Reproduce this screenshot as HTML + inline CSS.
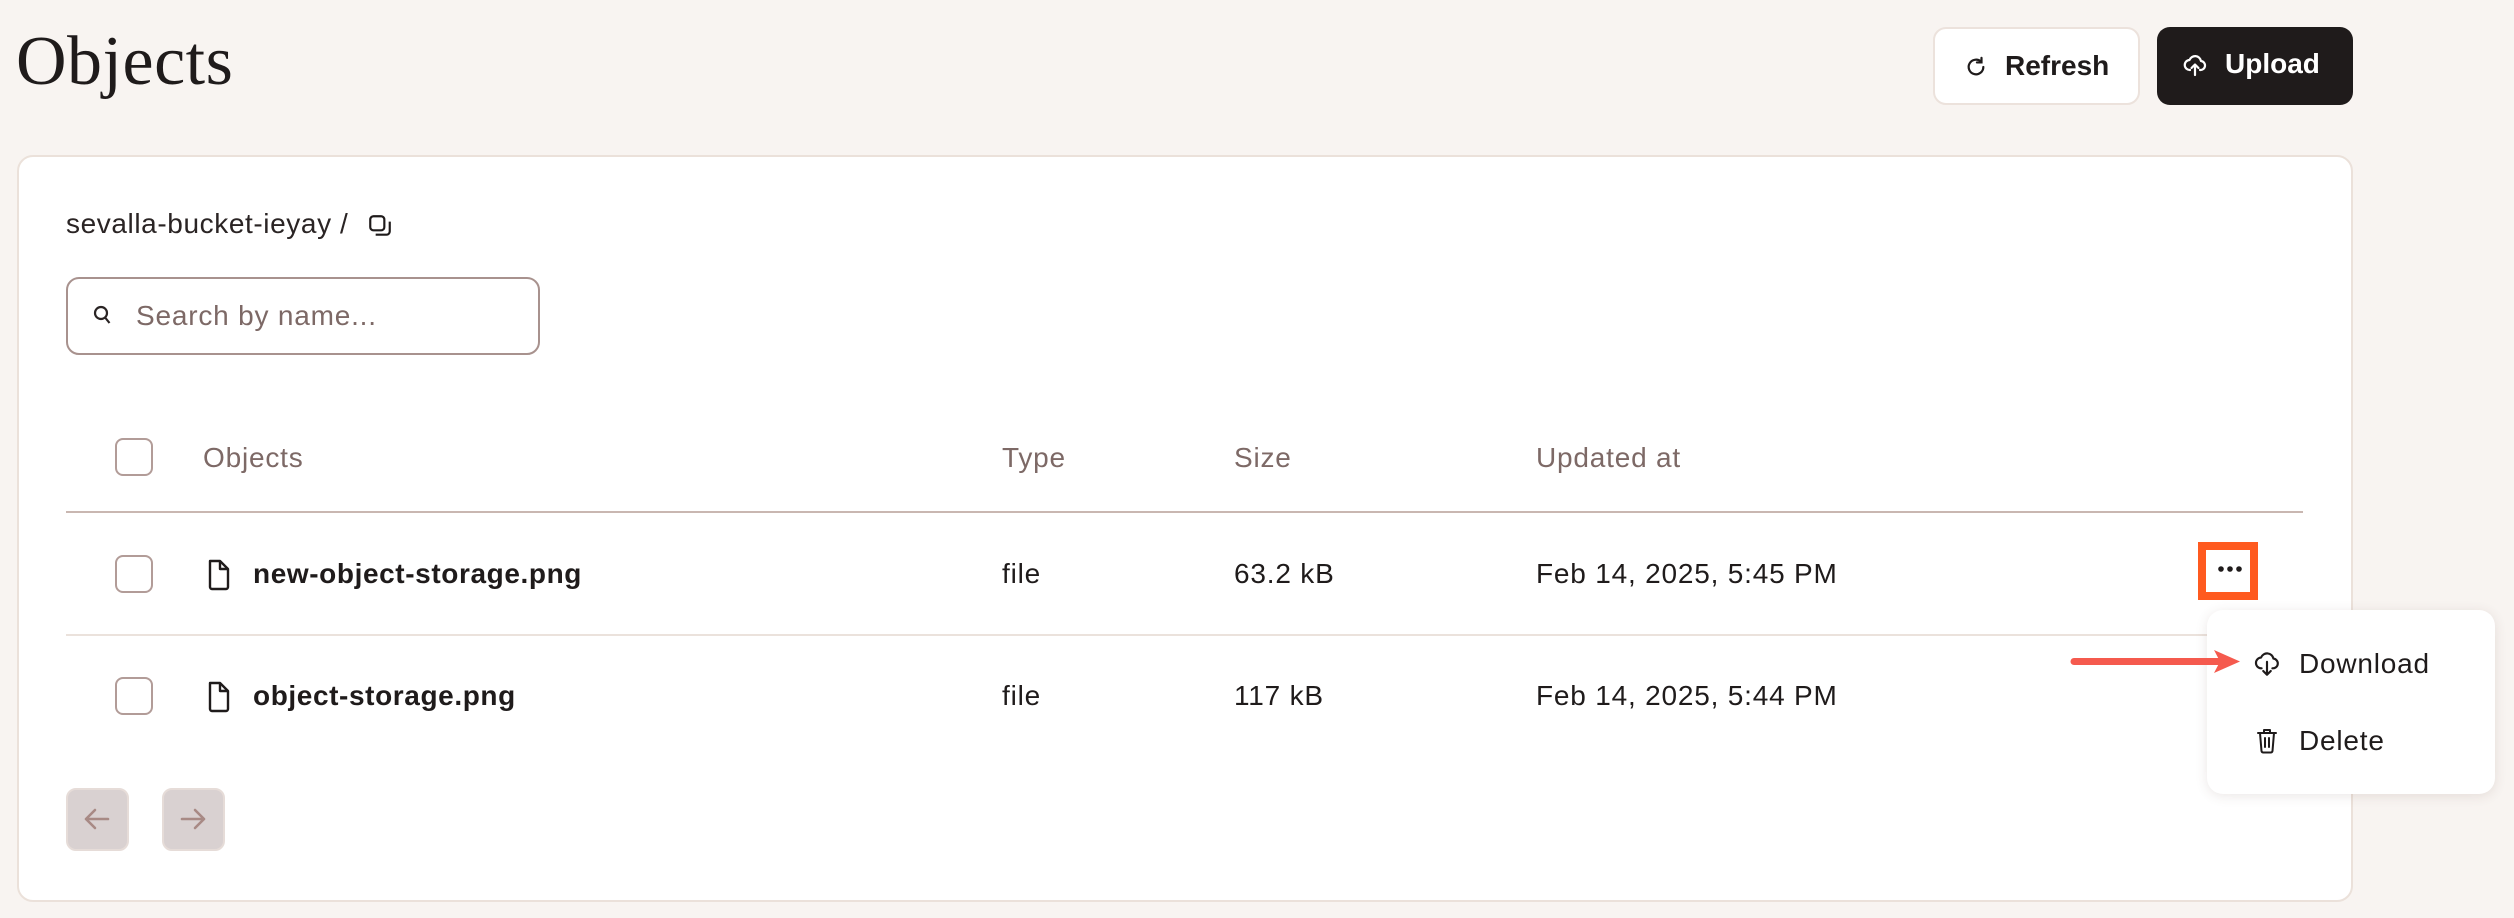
<!DOCTYPE html>
<html><head><meta charset="utf-8"><style>
*{margin:0;padding:0;box-sizing:border-box}
body{width:2514px;height:918px;background:#f8f4f1;font-family:"Liberation Sans",sans-serif;position:relative;overflow:hidden;color:#1f1b1b}
.abs{position:absolute}
h1{position:absolute;left:16px;top:22px;font-family:"Liberation Serif",serif;font-weight:400;font-size:70px;color:#1f1b1b;letter-spacing:0.5px}
.btn{position:absolute;top:27px;height:78px;border-radius:13px;display:flex;align-items:center;font-weight:700;font-size:28px}
.card{position:absolute;left:17px;top:155px;width:2336px;height:747px;background:#fff;border:2px solid #ebe1da;border-radius:16px}
.t{position:absolute;font-size:28px;line-height:32px;letter-spacing:0.8px}
.hd{color:#7d6966}
.cb{position:absolute;left:115px;width:38px;height:38px;border:2px solid #b29c98;border-radius:8px;background:#fff}
.nm{font-weight:700;color:#1f1b1b;letter-spacing:0.6px}
</style></head><body>
<h1>Objects</h1>
<div class="btn" style="left:1933px;width:207px;background:#fff;border:2px solid #ece2dc;">
<svg class="abs" style="left:30px;top:27px" width="22" height="22" viewBox="0 0 24 24" fill="none" stroke="#1f1b1b" stroke-width="2.4" stroke-linecap="round"><path d="M20 12a8 8 0 1 1-2.6-5.9"/><path d="M18 2v5h-5"/></svg>
<span class="abs" style="left:70px;top:21px">Refresh</span></div>
<div class="btn" style="left:2157px;width:196px;background:#1f1b1b;color:#fff;">
<svg class="abs" style="left:26px;top:26px" width="24" height="24" viewBox="0 0 24 24" fill="none" stroke="#fff" stroke-width="2.2" stroke-linecap="round" stroke-linejoin="round"><path d="M7 17a5 5 0 0 1-.5-10A6 6 0 0 1 18 8a4.5 4.5 0 0 1-1 9"/><path d="M12 22v-10M8.5 15l3.5-3.5 3.5 3.5"/></svg>
<span class="abs" style="left:68px;top:21px">Upload</span></div>

<div class="card"></div>
<div class="t" style="left:66px;top:208px;font-size:28px;color:#2a2424;letter-spacing:0.6px">sevalla-bucket-ieyay /</div>
<svg class="abs" style="left:367px;top:213px" width="26" height="26" viewBox="0 0 24 24" fill="none" stroke="#1f1b1b" stroke-width="2"><rect x="3" y="3" width="13" height="13" rx="3"/><path d="M8 20h10a3 3 0 0 0 3-3V8"/></svg>

<div class="abs" style="left:66px;top:277px;width:474px;height:78px;border:2px solid #a8928e;border-radius:13px"></div>
<svg class="abs" style="left:93px;top:305px" width="20" height="22" viewBox="0 0 20 22" fill="none" stroke="#2a2424" stroke-width="2.2"><circle cx="8" cy="8" r="6"/><path d="M12.5 13l4 5"/></svg>
<div class="t" style="left:136px;top:300px;color:#7d6966">Search by name...</div>

<div class="cb" style="top:438px"></div>
<div class="t hd" style="left:203px;top:442px">Objects</div>
<div class="t hd" style="left:1002px;top:442px">Type</div>
<div class="t hd" style="left:1234px;top:442px">Size</div>
<div class="t hd" style="left:1536px;top:442px">Updated at</div>
<div class="abs" style="left:66px;top:511px;width:2237px;height:2px;background:#c9b7b1"></div>

<div class="cb" style="top:555px"></div>
<svg class="abs" style="left:206px;top:559px" width="26" height="32" viewBox="0 0 26 32" fill="none" stroke="#1f1b1b" stroke-width="2.4" stroke-linejoin="round"><path d="M4 2h10l8 8v18a2 2 0 0 1-2 2H6a2 2 0 0 1-2-2z"/><path d="M14 2v8h8"/></svg>
<div class="t nm" style="left:253px;top:558px">new-object-storage.png</div>
<div class="t" style="left:1002px;top:558px">file</div>
<div class="t" style="left:1234px;top:558px">63.2 kB</div>
<div class="t" style="left:1536px;top:558px">Feb 14, 2025, 5:45 PM</div>
<div class="abs" style="left:66px;top:634px;width:2237px;height:2px;background:#ebe2dc"></div>

<div class="cb" style="top:677px"></div>
<svg class="abs" style="left:206px;top:681px" width="26" height="32" viewBox="0 0 26 32" fill="none" stroke="#1f1b1b" stroke-width="2.4" stroke-linejoin="round"><path d="M4 2h10l8 8v18a2 2 0 0 1-2 2H6a2 2 0 0 1-2-2z"/><path d="M14 2v8h8"/></svg>
<div class="t nm" style="left:253px;top:680px">object-storage.png</div>
<div class="t" style="left:1002px;top:680px">file</div>
<div class="t" style="left:1234px;top:680px">117 kB</div>
<div class="t" style="left:1536px;top:680px">Feb 14, 2025, 5:44 PM</div>

<div class="abs" style="left:66px;top:788px;width:63px;height:63px;background:#d9d1d1;border-radius:10px;border:2px solid #e6dcd8"></div>
<svg class="abs" style="left:81px;top:803px" width="32" height="32" viewBox="0 0 32 32" fill="none" stroke="#a88a85" stroke-width="2.6" stroke-linecap="round" stroke-linejoin="round"><path d="M27 16H5M14 7l-9 9 9 9"/></svg>
<div class="abs" style="left:162px;top:788px;width:63px;height:63px;background:#d9d1d1;border-radius:10px;border:2px solid #e6dcd8"></div>
<svg class="abs" style="left:177px;top:803px" width="32" height="32" viewBox="0 0 32 32" fill="none" stroke="#a88a85" stroke-width="2.6" stroke-linecap="round" stroke-linejoin="round"><path d="M5 16h22M18 7l9 9-9 9"/></svg>

<div class="abs" style="left:2198px;top:542px;width:60px;height:58px;border:8px solid #ff5a1f"></div>
<svg class="abs" style="left:2216px;top:564px" width="28" height="10" viewBox="0 0 28 10" fill="#1f1b1b"><circle cx="5" cy="5" r="2.8"/><circle cx="14" cy="5" r="2.8"/><circle cx="23" cy="5" r="2.8"/></svg>

<div class="abs" style="left:2207px;top:610px;width:288px;height:184px;background:#fff;border-radius:16px;box-shadow:0 2px 12px rgba(90,60,50,0.12)"></div>
<svg class="abs" style="left:2254px;top:650px" width="26" height="28" viewBox="0 0 24 26" fill="none" stroke="#1f1b1b" stroke-width="2" stroke-linecap="round" stroke-linejoin="round"><path d="M7 17a5 5 0 0 1-.5-10A6 6 0 0 1 18 8a4.5 4.5 0 0 1-1 9"/><path d="M12 11v12M8.5 19.5l3.5 3.5 3.5-3.5"/></svg>
<div class="t" style="left:2299px;top:648px">Download</div>
<svg class="abs" style="left:2256px;top:728px" width="22" height="26" viewBox="0 0 22 26" fill="none" stroke="#1f1b1b" stroke-width="2" stroke-linecap="round" stroke-linejoin="round"><path d="M2 5h18M8 5V2h6v3M4 5l1.5 18a2 2 0 0 0 2 1.5h7a2 2 0 0 0 2-1.5L18 5M9 10v9M13 10v9"/></svg>
<div class="t" style="left:2299px;top:725px">Delete</div>

<svg class="abs" style="left:2070px;top:648px" width="172" height="28" viewBox="0 0 172 28"><path d="M4 13.5H150" stroke="#f55a4e" stroke-width="7" stroke-linecap="round"/><path d="M144 2L170 13.5L144 25L150 13.5z" fill="#f55a4e"/></svg>
</body></html>
